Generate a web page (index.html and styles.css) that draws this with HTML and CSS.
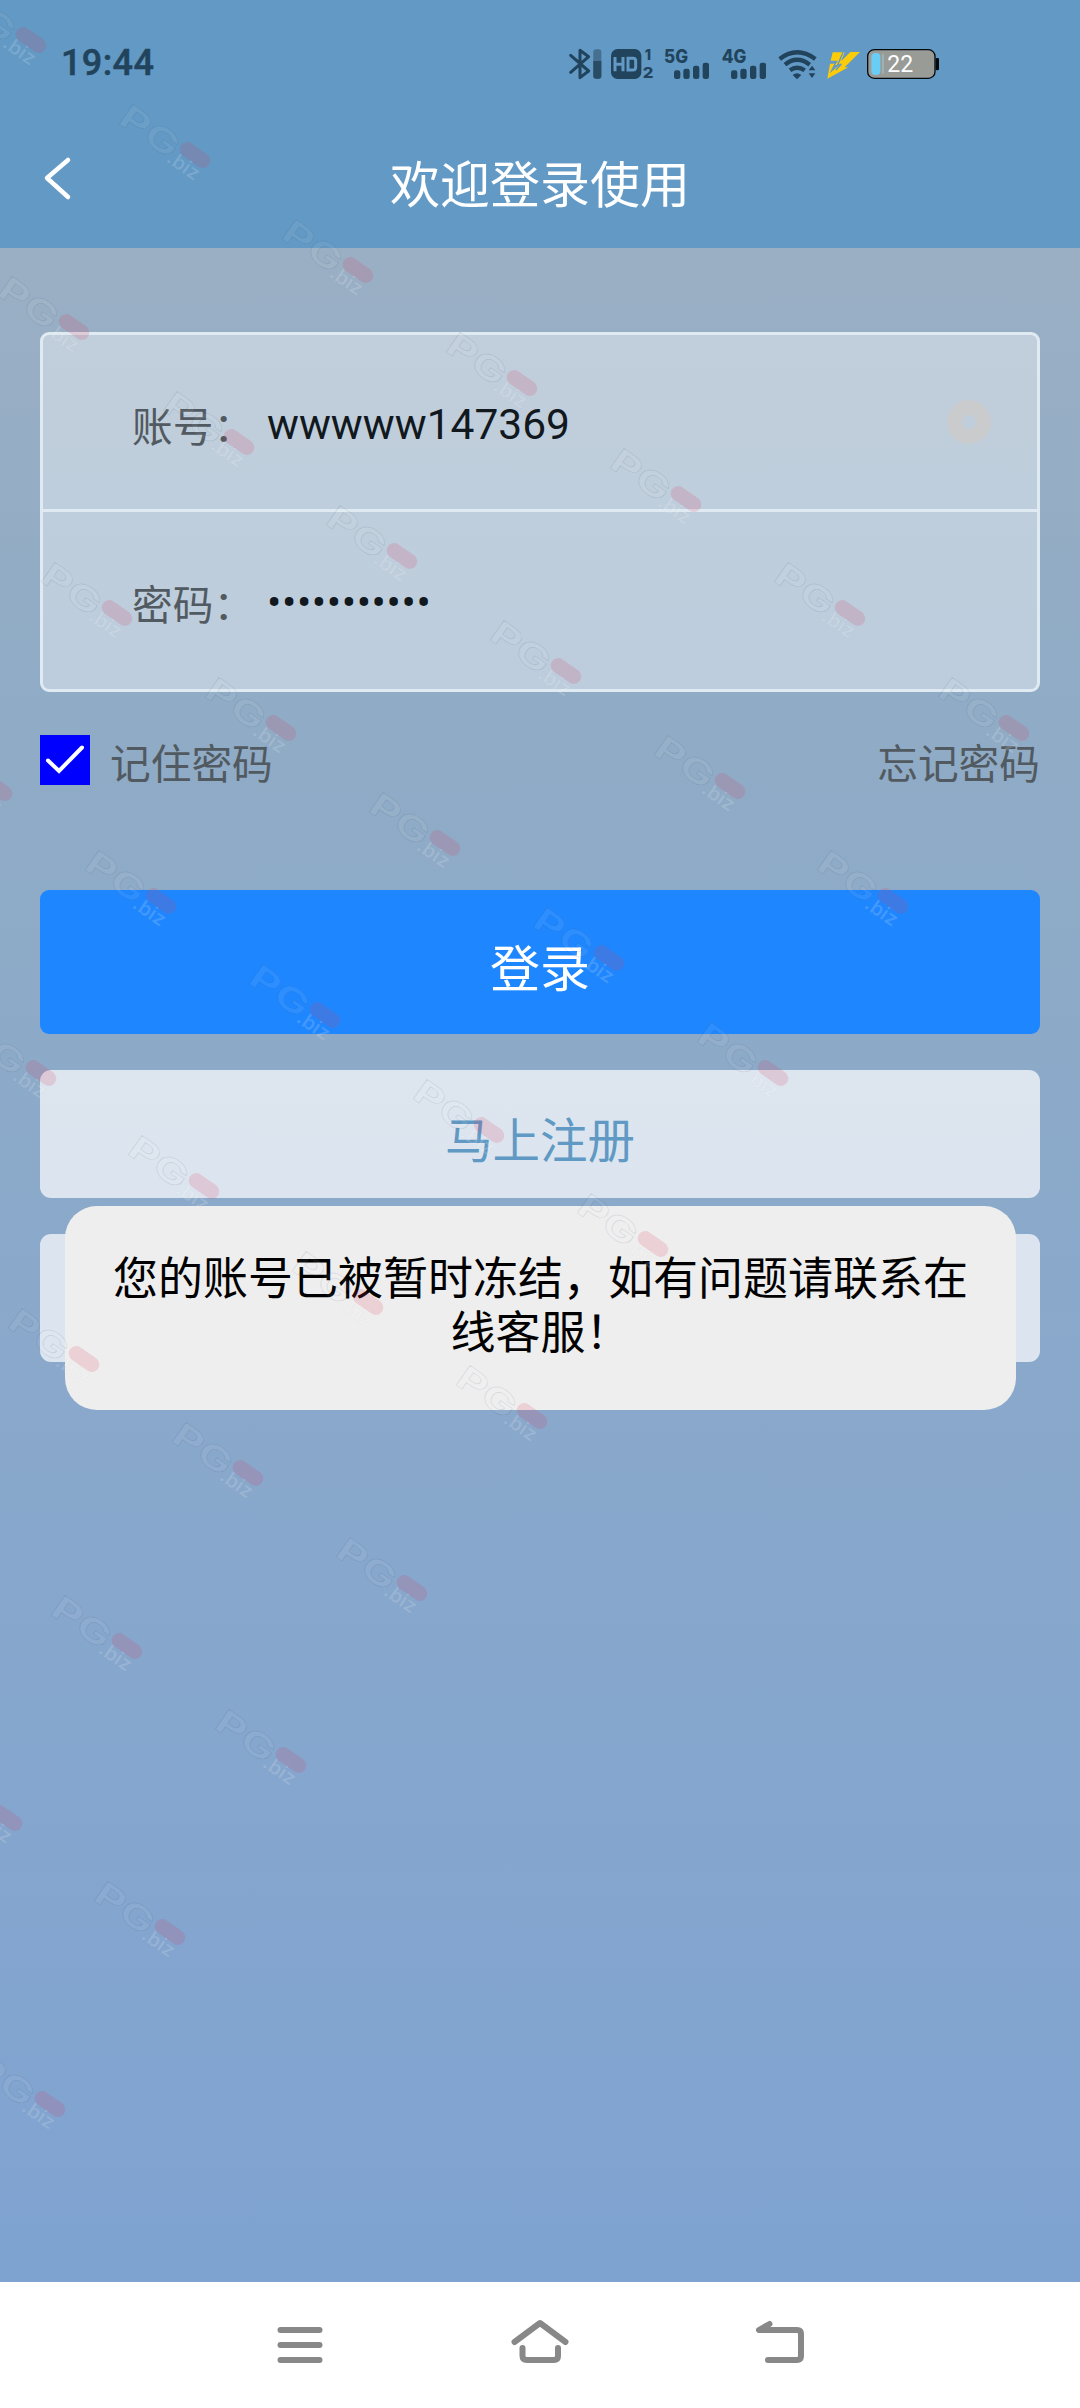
FILE: index.html
```html
<!DOCTYPE html>
<html lang="zh-CN">
<head>
<meta charset="utf-8">
<title>欢迎登录使用</title>
<link rel="stylesheet" href="styles.css">
</head>
<body>
<div class="screen">
  <header class="header">
    <div class="status">
      <span class="clock">19:44</span>
      <svg class="status-icons" width="400" height="50" viewBox="0 0 1200 150">
        <g transform="translate(-60 -45)">
          <g fill="none" stroke="#21435c" stroke-width="9" stroke-linejoin="round" stroke-linecap="round">
            <path d="M92 103L146 150L120 170V88L146 107L92 154"/>
          </g>
          <rect x="160" y="85" width="24" height="88" rx="8" fill="#466f90"/>
          <path d="M160 120H184V165Q184 173 176 173H168Q160 173 160 165Z" fill="#294b64"/>
          <rect x="213" y="84" width="91" height="90" rx="20" fill="#21435c"/>
          <g fill="none" stroke="#6299c5" stroke-width="9"><path d="M225 108V151M249 108V151M225 130H249M264 112H279Q287 112 287 120V139Q287 147 279 147H264Z"/></g>
          <g class="net"><text x="314" y="116" font-size="43">1</text><text x="308" y="172" font-size="45" textLength="32" lengthAdjust="spacingAndGlyphs">2</text>
          <text x="372" y="126" font-size="56" textLength="72" lengthAdjust="spacingAndGlyphs">5G</text><text x="545" y="126" font-size="56" textLength="74" lengthAdjust="spacingAndGlyphs">4G</text></g>
          <g id="bars" fill="#21435c"><rect x="402" y="148" width="19" height="26" rx="7"/><rect x="430" y="143" width="19" height="31" rx="7"/><rect x="459" y="134" width="19" height="40" rx="7"/><rect x="488" y="125" width="19" height="49" rx="7"/></g>
          <use href="#bars" x="171"/>
          <g fill="none" stroke="#21435c" stroke-width="13"><path d="M719 114Q771 74 826 114"/><path d="M735 131Q771 102 809 131"/><path d="M750 148Q771 132 794 148"/></g>
          <path d="M758 162Q771 152 784 162L771 175ZM806 148L816 134L826 148ZM806 157H826L816 171Z" fill="#21435c"/>
          <path d="M878 94H914L903 121L931 93H960L914 139H925L862 173L870 128H883L869 157L898 132H885L894 119H872Z" fill="#fccb09"/>
          <path d="M909 94L892 134L904 129L888 147" fill="none" stroke="#6299c5" stroke-width="4"/>
          <rect x="983" y="86" width="202" height="86" rx="20" fill="#999b97" stroke="#05090c" stroke-width="4"/>
          <rect x="1187" y="111" width="10" height="37" rx="4" fill="#05090c"/>
          <rect x="994" y="96" width="27" height="66" rx="12" fill="#69cef5"/><path d="M1029 99V158" stroke="#9bbdca" stroke-width="4"/>
          <text class="batt" x="1042" y="153" font-size="69">22</text>
        </g>
      </svg>
    </div>
    <div class="titlebar">
      <svg class="back" width="40" height="50" viewBox="0 0 40 50"><path d="M30 8L9 26L30 45" fill="none" stroke="#fff" stroke-width="4.5" stroke-linecap="round" stroke-linejoin="round"/></svg>
      <h1>欢迎登录使用</h1>
    </div>
  </header>
  <main class="content">
    <div class="card">
      <div class="field"><span class="label">账号：</span><span class="value">wwwww147369</span><i class="clear"></i></div>
      <div class="field"><span class="label">密码：</span><span class="value dots">•••••••••••</span></div>
    </div>
    <div class="options">
      <svg width="50" height="50" viewBox="0 0 50 50"><rect width="50" height="50" fill="#00f"/><path d="M8 25.5L19 36L42 12.500" fill="none" stroke="#fff" stroke-width="4" stroke-linecap="round"/></svg>
      <span class="remember">记住密码</span><span class="forgot">忘记密码</span>
    </div>
    <div class="btn login">登录</div>
    <div class="btn light">马上注册</div>
    <div class="btn light"></div>
  </main>
  <nav class="nav">
    <svg width="60" height="60" viewBox="270 2315 60 60"><path d="M280.5 2330H319.5M280.5 2345H319.5M280.5 2360H319.5"/></svg>
    <svg width="60" height="60" viewBox="510 2315 60 60"><path d="M514.5 2342L540 2323L565.500 2342M522.5 2348V2356Q522.500 2360 527 2360H554Q558 2360 558 2356V2348"/></svg>
    <svg width="60" height="60" viewBox="750 2315 60 60"><path d="M769.500 2324L759 2330H797Q801 2330 801 2334V2356Q801 2360 797 2360H768"/></svg>
  </nav>
  <div class="toast">您的账号已被暂时冻结，如有问题请联系在线客服！</div>
  <svg class="marks" width="1080" height="2282" viewBox="0 0 1080 2282">
    <defs><g id="mark">
      <g transform="rotate(35)">
        <text class="pg" x="-83" y="18" font-size="33" textLength="65" lengthAdjust="spacingAndGlyphs">PG</text>
        <text class="biz" x="-21" y="22" font-size="20">.biz</text>
        <rect x="-17" y="-7.500" width="34" height="15" rx="7.5" fill="#dc3c60" fill-opacity=".17"/>
      </g></g></defs>
    <use href="#mark" x="31" y="40"/><use href="#mark" x="195" y="155"/><use href="#mark" x="358" y="270"/><use href="#mark" x="522" y="383"/><use href="#mark" x="686" y="499"/><use href="#mark" x="850" y="613"/><use href="#mark" x="1014" y="728"/>
    <use href="#mark" x="74" y="327"/><use href="#mark" x="239" y="442"/><use href="#mark" x="402" y="556"/><use href="#mark" x="566" y="671"/><use href="#mark" x="730" y="786"/><use href="#mark" x="893" y="901"/>
    <use href="#mark" x="117" y="613"/><use href="#mark" x="281" y="728"/><use href="#mark" x="445" y="843"/><use href="#mark" x="609" y="958"/><use href="#mark" x="773" y="1073"/>
    <use href="#mark" x="-3" y="788"/><use href="#mark" x="161" y="901"/><use href="#mark" x="325" y="1015"/><use href="#mark" x="489" y="1130"/><use href="#mark" x="653" y="1244"/>
    <use href="#mark" x="41" y="1073"/><use href="#mark" x="204" y="1186"/><use href="#mark" x="368" y="1302"/><use href="#mark" x="532" y="1416"/>
    <use href="#mark" x="84" y="1359"/><use href="#mark" x="248" y="1473"/><use href="#mark" x="412" y="1588"/>
    <use href="#mark" x="127" y="1646"/><use href="#mark" x="291" y="1760"/>
    <use href="#mark" x="7" y="1818"/><use href="#mark" x="170" y="1932"/><use href="#mark" x="50" y="2104"/>
  </svg>
</div>
</body>
</html>
```
FILE: styles.css
```css
body { margin: 0; font-family: Roboto, "Noto Sans CJK SC", sans-serif; }
.screen { position: relative; width: 1080px; height: 2408px; display: flex; flex-direction: column; overflow: hidden; background: linear-gradient(#9aafc4 248px, #8fabc6 750px, #89a8cb 1400px, #7fa3d1 2282px); }
.header { height: 248px; background: #6299c5; }
.status { height: 124px; display: flex; align-items: center; box-sizing: border-box; padding: 0 0 0 61px; }
.clock { width: 499px; font-size: 36px; font-weight: 500; line-height: 40px; padding-top: 2px; color: #21435c; letter-spacing: .4px; -webkit-text-stroke: .5px #21435c; }
.status-icons { margin-top: -3px; }
.net { font-family: Inter, sans-serif; font-weight: 800; fill: #21435c; }
.batt { font-family: Roboto, sans-serif; fill: #fff; }
.titlebar { height: 124px; display: flex; align-items: center; padding: 0 38px; }
.back { margin-top: -18px; }
h1 { flex: 1; margin: 0 40px 0 0; text-align: center; color: #fff; font-size: 50px; font-weight: 400; line-height: 60px; }
.content { flex: 1; padding: 84px 40px 0; display: flex; flex-direction: column; }
.card { box-sizing: border-box; height: 360px; border: 3px solid #dfeaf2; border-radius: 9px; background: rgba(255,255,255,.4); }
.field { height: 174px; box-sizing: border-box; padding: 0 46px 0 89px; display: flex; align-items: center; }
.field + .field { height: 180px; border-top: 3px solid #dfeaf2; }
.label { width: 135px; padding-top: 11px; font-size: 40.7px; color: #525a61; white-space: nowrap; line-height: 60px; }
.value { flex: 1; padding-top: 5px; font-size: 42.5px; line-height: 60px; color: #11181e; }
.dots { letter-spacing: .6px; }
.clear { width: 14px; height: 14px; border: 15px solid #cbcac9; border-radius: 50%; opacity: .8; }
.options { margin-top: 43px; height: 50px; display: flex; align-items: center; font-size: 40.7px; line-height: 60px; color: #525a61; }
.options span { padding-top: 10px; }
.remember { margin-left: 20px; flex: 1; }
.btn { display: flex; align-items: center; justify-content: center; box-sizing: border-box; }
.login { margin-top: 105px; height: 144px; padding-top: 5px; border-radius: 9px; background: #1e87ff; color: #fff; font-size: 50px; }
.light { margin-top: 36px; height: 128px; padding-top: 6px; border-radius: 11px; background: rgba(255,255,255,.7); color: #5f99c4; font-size: 47.5px; }
.nav { height: 126px; background: #fff; display: flex; justify-content: center; gap: 180px; align-items: center; }
.nav svg { fill: none; stroke: #888; stroke-width: 6; stroke-linecap: round; stroke-linejoin: round; }
.toast { position: absolute; left: 65px; top: 1206px; width: 951px; height: 204px; box-sizing: border-box; padding: 47px 45px 0; border-radius: 32px; background: #eee; color: #000; text-align: center; font-size: 45px; line-height: 54px; }
.marks { position: absolute; left: 0; top: 0; }
.pg { font-family: Inter, sans-serif; font-weight: 700; fill: rgba(255,255,255,.06); stroke: rgba(60,80,110,.13); stroke-width: .8px; }
.biz { font-family: Inter, sans-serif; font-weight: 600; fill: rgba(255,255,255,.16); stroke: rgba(60,80,110,.06); stroke-width: .6px; }
```
